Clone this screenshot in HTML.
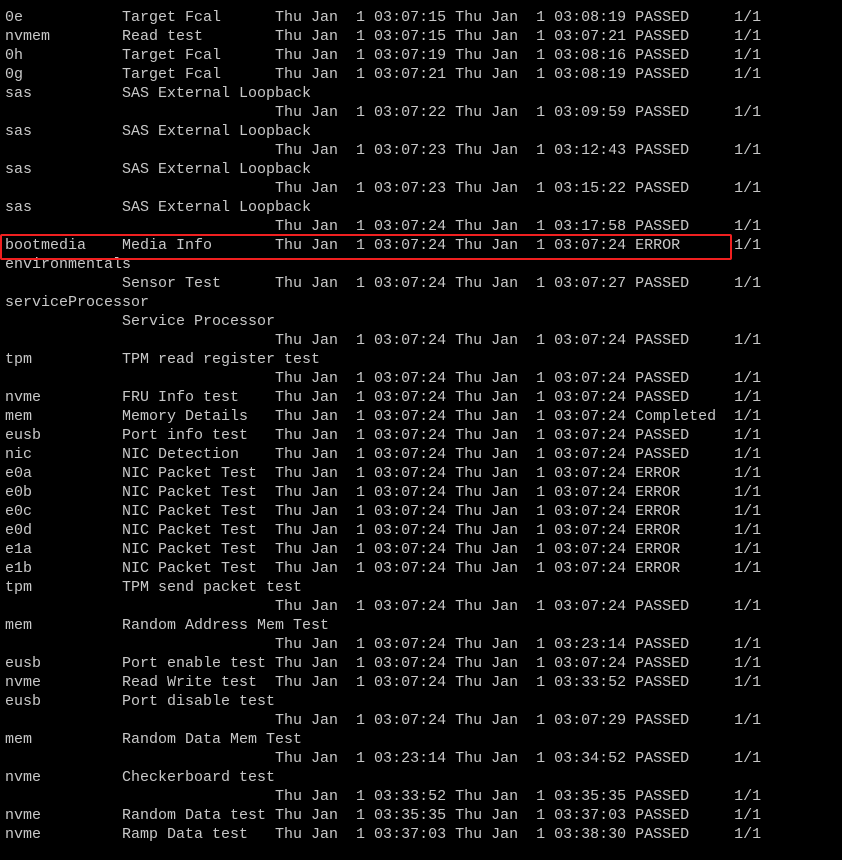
<!DOCTYPE html><html><head><style>
body{margin:0;background:#000;width:842px;height:860px;overflow:hidden;position:relative}
pre{margin:0;position:absolute;left:5px;top:8px;font-family:"Liberation Mono",monospace;font-size:15px;line-height:19px;color:#c8c8c8}
.box{position:absolute;left:0;top:234px;width:728px;height:22px;border:2px solid #f02020;border-radius:2px}
</style></head><body><pre>0e           Target Fcal      Thu Jan  1 03:07:15 Thu Jan  1 03:08:19 PASSED     1/1
nvmem        Read test        Thu Jan  1 03:07:15 Thu Jan  1 03:07:21 PASSED     1/1
0h           Target Fcal      Thu Jan  1 03:07:19 Thu Jan  1 03:08:16 PASSED     1/1
0g           Target Fcal      Thu Jan  1 03:07:21 Thu Jan  1 03:08:19 PASSED     1/1
sas          SAS External Loopback
                              Thu Jan  1 03:07:22 Thu Jan  1 03:09:59 PASSED     1/1
sas          SAS External Loopback
                              Thu Jan  1 03:07:23 Thu Jan  1 03:12:43 PASSED     1/1
sas          SAS External Loopback
                              Thu Jan  1 03:07:23 Thu Jan  1 03:15:22 PASSED     1/1
sas          SAS External Loopback
                              Thu Jan  1 03:07:24 Thu Jan  1 03:17:58 PASSED     1/1
bootmedia    Media Info       Thu Jan  1 03:07:24 Thu Jan  1 03:07:24 ERROR      1/1
environmentals
             Sensor Test      Thu Jan  1 03:07:24 Thu Jan  1 03:07:27 PASSED     1/1
serviceProcessor
             Service Processor
                              Thu Jan  1 03:07:24 Thu Jan  1 03:07:24 PASSED     1/1
tpm          TPM read register test
                              Thu Jan  1 03:07:24 Thu Jan  1 03:07:24 PASSED     1/1
nvme         FRU Info test    Thu Jan  1 03:07:24 Thu Jan  1 03:07:24 PASSED     1/1
mem          Memory Details   Thu Jan  1 03:07:24 Thu Jan  1 03:07:24 Completed  1/1
eusb         Port info test   Thu Jan  1 03:07:24 Thu Jan  1 03:07:24 PASSED     1/1
nic          NIC Detection    Thu Jan  1 03:07:24 Thu Jan  1 03:07:24 PASSED     1/1
e0a          NIC Packet Test  Thu Jan  1 03:07:24 Thu Jan  1 03:07:24 ERROR      1/1
e0b          NIC Packet Test  Thu Jan  1 03:07:24 Thu Jan  1 03:07:24 ERROR      1/1
e0c          NIC Packet Test  Thu Jan  1 03:07:24 Thu Jan  1 03:07:24 ERROR      1/1
e0d          NIC Packet Test  Thu Jan  1 03:07:24 Thu Jan  1 03:07:24 ERROR      1/1
e1a          NIC Packet Test  Thu Jan  1 03:07:24 Thu Jan  1 03:07:24 ERROR      1/1
e1b          NIC Packet Test  Thu Jan  1 03:07:24 Thu Jan  1 03:07:24 ERROR      1/1
tpm          TPM send packet test
                              Thu Jan  1 03:07:24 Thu Jan  1 03:07:24 PASSED     1/1
mem          Random Address Mem Test
                              Thu Jan  1 03:07:24 Thu Jan  1 03:23:14 PASSED     1/1
eusb         Port enable test Thu Jan  1 03:07:24 Thu Jan  1 03:07:24 PASSED     1/1
nvme         Read Write test  Thu Jan  1 03:07:24 Thu Jan  1 03:33:52 PASSED     1/1
eusb         Port disable test
                              Thu Jan  1 03:07:24 Thu Jan  1 03:07:29 PASSED     1/1
mem          Random Data Mem Test
                              Thu Jan  1 03:23:14 Thu Jan  1 03:34:52 PASSED     1/1
nvme         Checkerboard test
                              Thu Jan  1 03:33:52 Thu Jan  1 03:35:35 PASSED     1/1
nvme         Random Data test Thu Jan  1 03:35:35 Thu Jan  1 03:37:03 PASSED     1/1
nvme         Ramp Data test   Thu Jan  1 03:37:03 Thu Jan  1 03:38:30 PASSED     1/1</pre><div class="box"></div></body></html>
